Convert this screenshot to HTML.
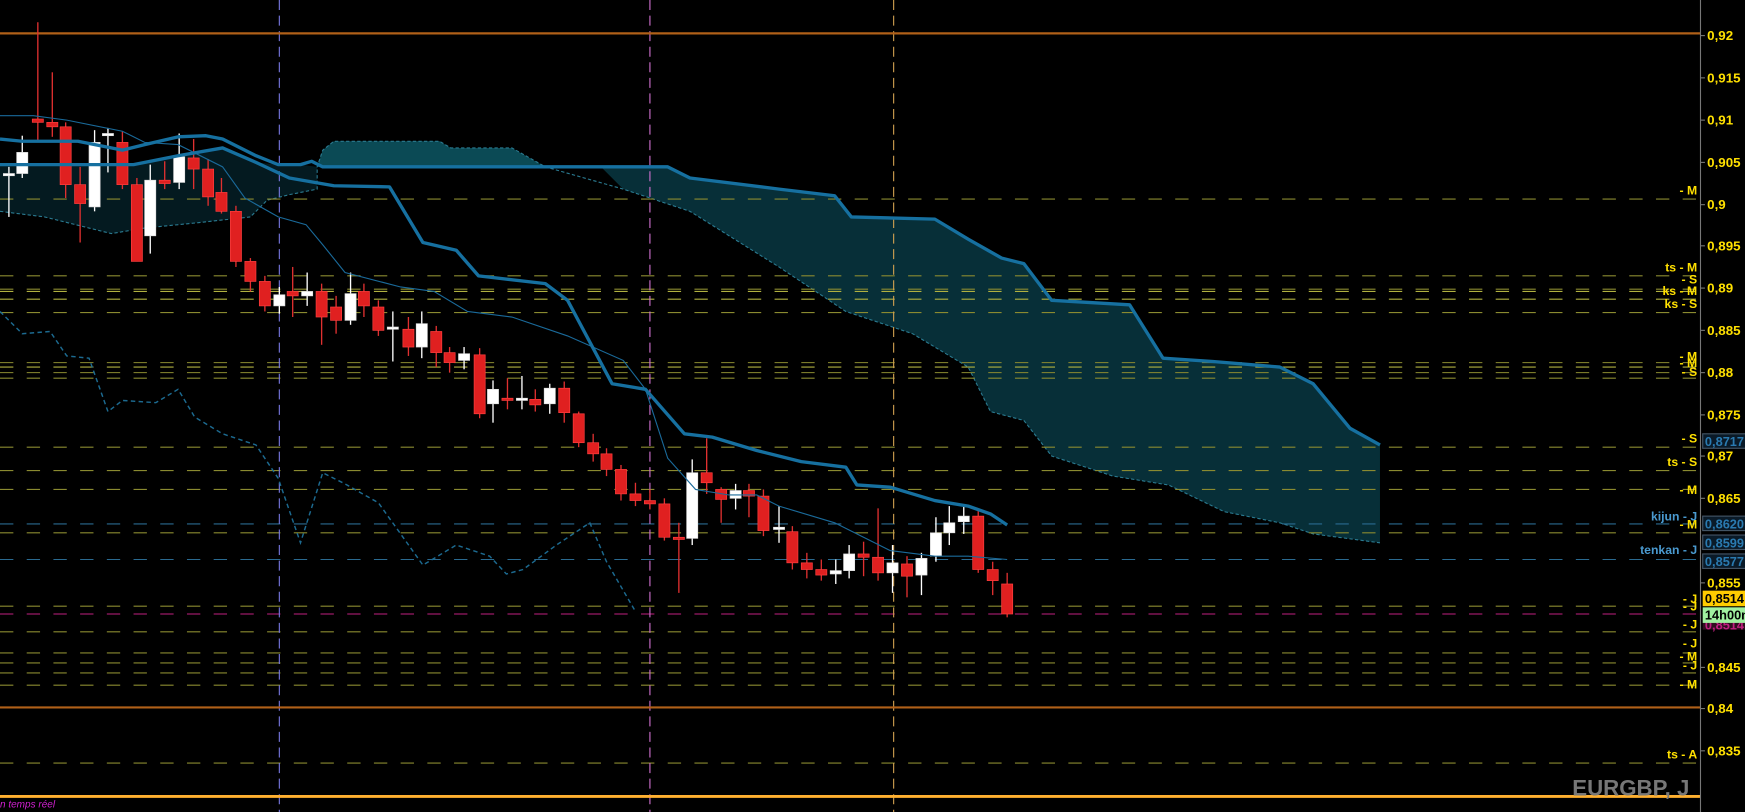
<!DOCTYPE html>
<html><head><meta charset="utf-8"><style>
html,body{margin:0;padding:0;background:#000;width:1745px;height:812px;overflow:hidden}
svg{display:block}
text{font-family:"Liberation Sans",Arial,sans-serif}
</style></head><body>
<svg id="c" width="1745" height="812" viewBox="0 0 1568 730" preserveAspectRatio="none" xmlns="http://www.w3.org/2000/svg">
<rect width="1568" height="730" fill="#000"/>
<!-- cloud fills -->
<polygon fill="#041a20" points="0,148 120,148 160,140 200,133 230,146 250,148 270,148 285,150 285,170 260,175 240,180 225,195 180,200 130,205 100,210 80,205 40,195 0,190"/>
<polygon fill="#0b4a55" points="285,150 290,135 300,127 395,127 405,133 460,133 490,150"/>
<polygon fill="#072f38" points="540,150 600,150 620,160 700,170 750,176 765,195 840,197 870,215 900,232 920,237 945,270 1015,274 1045,322 1090,325 1150,330 1180,345 1213,385 1240,400 1240,488 1180,480 1150,470 1100,460 1050,436 1000,428 945,410 920,378 890,370 870,330 820,300 760,280 700,240 620,190 560,170"/>
<!-- dashed senkou A -->
<polyline fill="none" stroke="#2a7a90" stroke-width="1" stroke-dasharray="3,2" points="0,190 40,195 80,205 100,210 130,205 180,200 225,195 240,180 260,175 285,170 285,150 290,135 300,127 395,127 405,133 460,133 490,150 560,170 620,190 700,240 760,280 820,300 870,330 890,370 920,378 945,410 1000,428 1050,436 1100,460 1150,470 1180,480 1240,488"/>
<g id="hl"></g>
<!-- vertical lines -->
<line x1="251" y1="0" x2="251" y2="730" stroke="#7878e0" stroke-dasharray="9,5"/>
<line x1="584" y1="0" x2="584" y2="730" stroke="#d070d0" stroke-dasharray="9,5"/>
<line x1="803" y1="0" x2="803" y2="730" stroke="#d0a050" stroke-dasharray="9,5"/>
<!-- orange lines -->
<line x1="0" y1="30" x2="1528" y2="30" stroke="#b06018" stroke-width="2"/>
<line x1="0" y1="636" x2="1528" y2="636" stroke="#b06018" stroke-width="2"/>
<line x1="0" y1="716" x2="1528" y2="716" stroke="#ffb030" stroke-width="2.5"/>
<!-- chikou -->
<polyline fill="none" stroke="#1c6a90" stroke-width="1.3" stroke-dasharray="4,3" points="0,280 20,300 45,298 60,320 80,322 97,370 110,360 140,362 160,350 175,375 200,390 230,400 250,430 270,488 290,425 310,435 340,452 380,508 410,490 440,500 455,516 470,512 500,490 530,470 545,505 570,548"/>
<g id="cd"></g>
<!-- ichimoku lines -->
<polyline fill="none" stroke="#1a6a9a" stroke-width="1" points="0,104 30,104 60,108 110,118 130,128 160,130 200,150 220,178 250,195 275,202 290,220 310,245 360,258 390,262 420,280 460,285 510,302 560,324 580,350 600,412 625,440 655,445 680,445 700,455 750,470 800,495 840,500 870,500 905,503"/>
<polyline fill="none" stroke="#1670a0" stroke-width="3" stroke-linejoin="round" points="0,125 20,127 70,127 110,135 130,130 160,123 185,122 200,125 230,140 250,148 270,148 280,145 290,150 600,150 620,160 700,170 750,176 765,195 840,197 870,215 900,232 920,237 945,270 1015,274 1045,322 1090,325 1150,330 1180,345 1213,385 1240,400"/>
<polyline fill="none" stroke="#1670a0" stroke-width="3" stroke-linejoin="round" points="0,148 120,148 160,140 200,133 230,146 260,160 300,167 350,168 380,218 410,225 430,248 490,255 510,270 550,345 580,350 615,390 640,393 680,405 720,415 760,420 770,436 800,438 840,450 870,455 890,462 905,472"/>
<!-- axis -->
<line x1="1528" y1="0" x2="1528" y2="730" stroke="#777" stroke-width="1"/>
<g id="ax" font-size="12" font-weight="bold" fill="#ffe000"></g>
<g id="lb" font-size="11" font-weight="bold" fill="#ffe000" text-anchor="end"></g>
<!-- price boxes -->
<g font-size="11.5" font-weight="bold">
<rect x="1530" y="390" width="40" height="13" fill="#0a1a28" stroke="#456"/><text x="1532" y="401" fill="#2a7ab0">0,8717</text>
<rect x="1530" y="464" width="40" height="13" fill="#0a1a28" stroke="#456"/><text x="1532" y="475" fill="#2a7ab0">0,8620</text>
<rect x="1530" y="481" width="40" height="13" fill="#0a1a28" stroke="#456"/><text x="1532" y="492" fill="#2a7ab0">0,8599</text>
<rect x="1530" y="498" width="40" height="13" fill="#0a1a28" stroke="#456"/><text x="1532" y="509" fill="#2a7ab0">0,8577</text>
<rect x="1530" y="556" width="40" height="10" fill="#301020"/><text x="1532" y="566" fill="#c02080">0,8514</text>
<rect x="1530" y="531" width="40" height="14" fill="#ffcc00"/><text x="1532" y="542" fill="#000">0,8514</text>
<rect x="1530" y="546" width="40" height="14" fill="#a0f0a0"/><text x="1532" y="557" fill="#000">14h00m</text>
</g>
<text x="1518" y="715" font-size="20" font-weight="bold" fill="#777" text-anchor="end">EURGBP, J</text>
<text x="0" y="726" font-size="9" font-style="italic" fill="#d020d0">n temps réel</text>
</svg>
<script>
var NS="http://www.w3.org/2000/svg";
function el(p,t,a,txt){var e=document.createElementNS(NS,t);for(var k in a)e.setAttribute(k,a[k]);if(txt)e.textContent=txt;document.getElementById(p).appendChild(e);return e;}
// horizontal dashed lines
var H=[[179,"#8a8a30"],[248,"#8a8a30"],[260,"#8a8a30"],[262,"#b0b040"],[269,"#b0b040"],[281,"#8a8a30"],[326,"#8a8a30"],[330,"#b0b040"],[335,"#8a8a30"],[340,"#8a8a30"],[402,"#8a8a30"],[423,"#8a8a30"],[440,"#8a8a30"],[471,"#2a6a90"],[479,"#8a8a30"],[503,"#2a6a90"],[545,"#8a8a30"],[552,"#c02080"],[568,"#8a8a30"],[587,"#8a8a30"],[596,"#8a8a30"],[605,"#8a8a30"],[616,"#8a8a30"],[686,"#8a8a30"]];
H.forEach(function(h){el("hl","line",{x1:0,x2:1528,y1:h[0],y2:h[0],stroke:h[1],"stroke-dasharray":"12,12","stroke-width":1});});
// axis labels
var A=[["0,92",32],["0,915",70],["0,91",108],["0,905",146],["0,9",184],["0,895",221],["0,89",259],["0,885",297],["0,88",335],["0,875",373],["0,87",410],["0,865",448],["0,855",524],["0,845",600],["0,84",637],["0,835",675]];
A.forEach(function(a){el("ax","line",{x1:1528,x2:1532,y1:a[1],y2:a[1],stroke:"#777"});el("ax","text",{x:1534,y:a[1]+4},a[0]);});
var L=[["- M",175],["ts - M",244],["- S",255],["ks - M",265],["ks - S",277],["- M",324],["- M",330],["- S",338],["- S",398],["ts - S",419],["- M",444],["- M",475],["- J",542],["- J",549],["- J",565],["- J",582],["- M",594],["- J",602],["- M",619],["ts - A",682]];
L.forEach(function(l){el("lb","text",{x:1525,y:l[1]},l[0]);});
el("lb","text",{x:1525,y:468,fill:"#4a9ad0"},"kijun - J");
el("lb","text",{x:1525,y:498,fill:"#4a9ad0"},"tenkan - J");
// candles [x, top, bottom, high, low, white?]
var C=[[8,156,158,150,195,1],[20,137,156,122,160,1],[34,107,110,20,128,0],[47,110,114,65,123,0],[59,114,166,110,178,0],[72,166,183,150,218,0],[85,128,186,117,190,1],[97,120,122,115,155,1],[110,128,166,118,170,0],[123,166,235,160,235,0],[135,162,212,148,228,1],[148,162,165,145,170,0],[161,141,164,120,170,1],[174,142,152,125,170,0],[187,152,177,143,185,0],[199,173,190,160,192,0],[212,190,235,185,240,0],[225,235,253,232,262,0],[238,253,275,248,280,0],[251,265,275,258,282,1],[263,262,266,240,285,0],[276,262,266,245,275,1],[289,262,285,255,310,0],[302,276,288,266,300,0],[315,264,288,245,292,1],[327,262,275,255,285,0],[340,276,297,270,302,0],[353,294,296,280,325,1],[367,296,312,285,320,0],[379,291,312,280,322,1],[392,298,317,293,330,0],[404,317,326,312,335,0],[417,318,324,312,332,1],[431,319,372,313,376,0],[443,350,363,342,380,1],[456,358,360,340,368,0],[469,358,360,338,368,1],[481,359,364,350,370,0],[494,349,363,345,372,1],[507,349,371,343,380,0],[520,372,398,370,402,0],[533,398,408,390,415,0],[545,408,422,403,428,0],[558,422,444,418,450,0],[571,444,450,434,455,0],[584,450,453,440,458,0],[597,453,483,448,486,0],[610,483,485,470,533,0],[622,425,484,413,490,1],[635,425,434,394,444,0],[648,440,449,438,470,0],[661,441,448,435,458,1],[673,441,446,435,465,0],[686,446,477,440,482,0],[700,474,476,455,488,1],[712,478,506,473,512,0],[725,506,512,497,520,0],[738,512,517,503,522,0],[751,513,516,503,525,1],[763,498,513,490,520,1],[776,498,501,487,518,0],[789,501,515,457,522,0],[802,506,515,490,533,1],[815,507,518,500,537,0],[828,502,517,497,535,1],[841,479,500,465,505,1],[853,470,479,455,490,1],[866,464,469,455,480,1],[879,464,512,458,515,0],[892,512,522,505,535,0],[905,525,552,515,555,0]];
C.forEach(function(c){var col=c[5]?"#ffffff":"#e02020";
el("cd","line",{x1:c[0],x2:c[0],y1:c[3],y2:c[4],stroke:c[5]?"#fff":"#e03030","stroke-width":1.2});
var h=Math.max(c[2]-c[1],2);
el("cd","rect",{x:c[0]-5,y:c[1],width:10,height:h,fill:col,stroke:c[5]?"#ddd":"#ff4040","stroke-width":0.6});});
</script>
</body></html>
